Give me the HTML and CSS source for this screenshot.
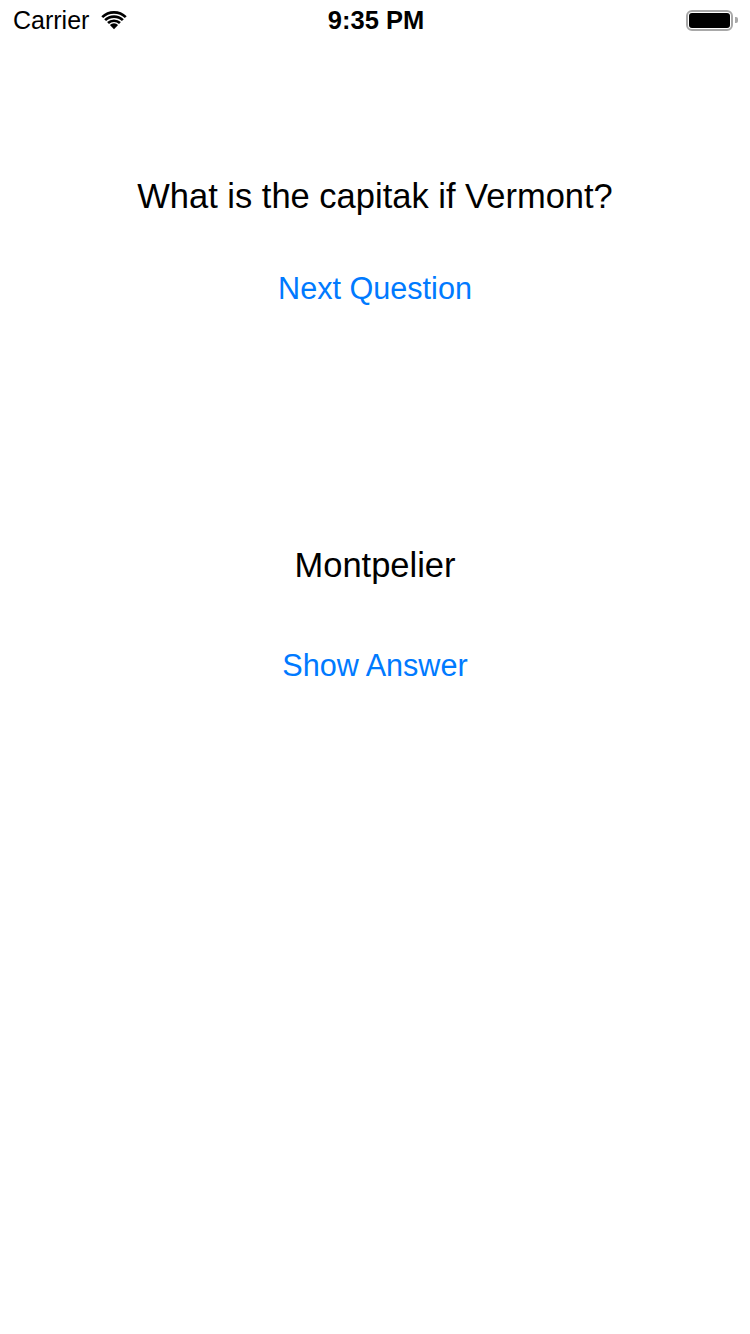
FILE: index.html
```html
<!DOCTYPE html>
<html>
<head>
<meta charset="utf-8">
<link rel="stylesheet" href="styles.css">
</head>
<body>
<div class="screen">
  <div class="status">
    <div class="left">
      <span class="carrier">Carrier</span>
      <svg class="wifi" width="28" height="21" viewBox="0 0 30 22">
        <path d="M15 21.5 L10.6 16.9 A6.4 6.4 0 0 1 19.4 16.9 Z" fill="#000"/>
        <path d="M7.6 13.8 A10.8 10.8 0 0 1 22.4 13.8 L20.4 15.9 A7.9 7.9 0 0 0 9.6 15.9 Z" fill="#000"/>
        <path d="M4.5 10.6 A15.2 15.2 0 0 1 25.5 10.6 L23.5 12.7 A12.3 12.3 0 0 0 6.5 12.7 Z" fill="#000"/>
        <path d="M1.4 7.4 A19.6 19.6 0 0 1 28.6 7.4 L26.6 9.5 A16.7 16.7 0 0 0 3.4 9.5 Z" fill="#000"/>
      </svg>
    </div>
    <div class="time">9:35 PM</div>
    <div class="right">
      <div class="battery"><div class="fill"></div></div>
      <div class="tip"></div>
    </div>
  </div>
  <div class="content">
    <div class="question">What is the capitak if Vermont?</div>
    <div class="button next">Next Question</div>
    <div class="answer">Montpelier</div>
    <div class="button show">Show Answer</div>
  </div>
</div>
</body>
</html>
```
FILE: styles.css
```css
html, body {
  margin: 0;
  padding: 0;
  background: #fff;
}
.screen {
  width: 750px;
  height: 1334px;
  font-family: "Liberation Sans", Arial, sans-serif;
  color: #000;
}
.status {
  height: 40px;
  display: flex;
  align-items: center;
  justify-content: space-between;
  padding: 0 12px 0 13px;
  position: relative;
}
.left {
  display: flex;
  align-items: center;
  gap: 11px;
  width: 200px;
}
.carrier {
  font-size: 25px;
}
.wifi {
  margin-top: -1px;
}
.time {
  font-size: 25.5px;
  font-weight: bold;
  position: absolute;
  left: 2px;
  right: 0;
  text-align: center;
  pointer-events: none;
}
.right {
  display: flex;
  align-items: center;
  gap: 2px;
}
.battery {
  width: 41px;
  height: 15px;
  border: 2px solid #a8a8a8;
  border-radius: 6px;
  padding: 1px;
  box-sizing: content-box;
  display: flex;
}
.fill {
  flex: 1;
  background: #000;
  border-radius: 3px;
}
.tip {
  width: 3px;
  height: 6px;
  background: #a8a8a8;
  border-radius: 0 2px 2px 0;
}
.content {
  display: flex;
  flex-direction: column;
  align-items: center;
}
.question {
  font-size: 34.5px;
  margin-top: 136px;
  line-height: 40px;
}
.button {
  color: #007aff;
  font-size: 30.6px;
  line-height: 40px;
}
.next {
  margin-top: 52px;
}
.answer {
  font-size: 34.5px;
  line-height: 40px;
  margin-top: 237px;
}
.show {
  margin-top: 60px;
}
```
